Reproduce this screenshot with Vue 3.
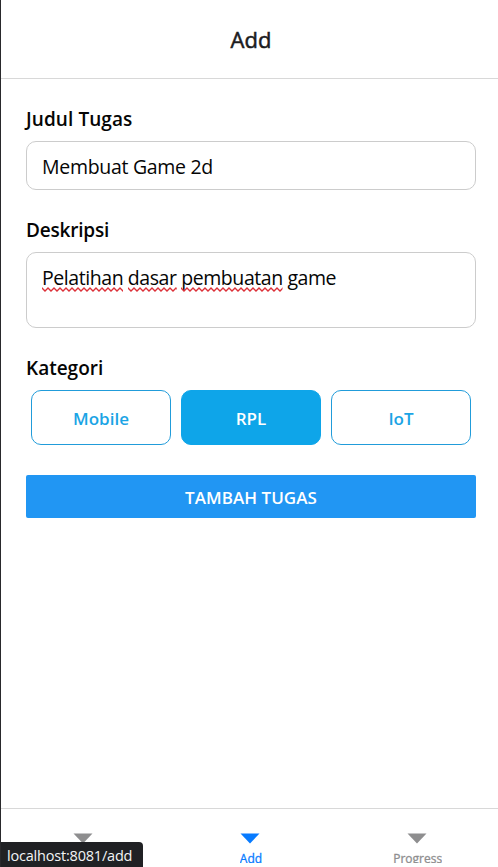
<script setup>
import { ref } from 'vue'

const title = ref('Membuat Game 2d')
const words = [
  { text: 'Pelatihan', misspelled: true },
  { text: 'dasar', misspelled: true },
  { text: 'pembuatan', misspelled: true },
  { text: 'game', misspelled: false },
]
const categories = ['Mobile', 'RPL', 'IoT']
const category = ref('RPL')
const tabs = [
  { id: 'first', label: '' },
  { id: 'add', label: 'Add' },
  { id: 'progress', label: 'Progress' },
]
const activeTab = 'add'
</script>

<template>
  <div class="screen">
    <header class="header"><h1>Add</h1></header>
    <main class="form">
      <label class="label judul">Judul Tugas</label>
      <div class="field title-field"><span class="value">{{ title }}</span></div>
      <label class="label deskripsi">Deskripsi</label>
      <div class="field area">
        <template v-for="(word, i) in words" :key="word.text">
          <span class="value word">{{ word.text }}<svg v-if="word.misspelled" class="squiggle" height="5">
            <defs>
              <pattern :id="'wave' + i" width="6" height="5" patternUnits="userSpaceOnUse">
                <path d="M-1 0 L0 1 L3 4 L6 1 L7 0" fill="none" stroke="#dc3038" stroke-width="1.3" />
              </pattern>
            </defs>
            <rect width="100%" height="5" :fill="`url(#wave${i})`" />
          </svg></span>{{ ' ' }}
        </template>
      </div>
      <label class="label">Kategori</label>
      <div class="categories">
        <button
          v-for="name in categories"
          :key="name"
          class="category"
          :class="{ selected: name === category }"
          @click="category = name"
        >{{ name }}</button>
      </div>
      <button class="submit">TAMBAH TUGAS</button>
    </main>
    <nav class="tabs">
      <a v-for="tab in tabs" :key="tab.id" class="tab" :class="{ active: tab.id === activeTab }">
        <svg class="marker" width="20" height="11" viewBox="0 0 20 11"><path d="M0.5 0.5H19.5L10 10.5Z" fill="currentColor" /></svg>
        <span class="tab-label">{{ tab.label }}</span>
      </a>
    </nav>
    <div class="status">localhost:8081/add</div>
  </div>
</template>

<style>
body {
  background: #fff;
}
</style>

<style scoped>
* {
  box-sizing: border-box;
}
.screen {
  position: relative;
  display: flex;
  flex-direction: column;
  width: 498px;
  height: 867px;
  overflow: hidden;
  border-left: 1px solid #29292c;
  background: #fff;
  font-family: "Open Sans", "Noto Sans", sans-serif;
  color: #050505;
}
.header {
  flex: none;
  height: 79px;
  display: flex;
  justify-content: center;
  align-items: center;
  padding: 0 0 1px 3px;
  border-bottom: 1px solid #d8d8d8;
}
h1 {
  margin: 0;
  font-size: 22px;
  line-height: 30px;
  font-weight: 500;
  color: #1c1c1e;
  -webkit-text-stroke: 0.5px currentColor;
}
.form {
  flex: 1;
  display: flex;
  flex-direction: column;
  padding: 25px 22px 0 25px;
  border-bottom: 1px solid #d8d8d8;
}
.label {
  height: 27px;
  margin-bottom: 10px;
  font-size: 19px;
  line-height: 31px;
  font-weight: 600;
  white-space: nowrap;
}
.judul {
  letter-spacing: 0.08px;
}
.deskripsi {
  letter-spacing: -0.2px;
}
.field {
  border: 1px solid #ccc;
  border-radius: 10px;
  padding: 12px 15px;
  white-space: nowrap;
  line-height: 26px;
  font-size: 19.5px;
}
.title-field {
  height: 49px;
  margin-bottom: 25px;
  letter-spacing: -0.3px;
}
.area {
  height: 76px;
  margin-bottom: 25px;
  letter-spacing: -0.43px;
}
.value {
  position: relative;
}
.squiggle {
  position: absolute;
  left: 0;
  bottom: -0.5px;
  width: 100%;
}
.categories {
  display: flex;
  gap: 10px;
  padding: 0 5px;
  margin-bottom: 30px;
}
button {
  font-family: inherit;
  font-weight: 600;
}
.category {
  flex: 1;
  height: 55px;
  padding: 2px 0 0;
  border: 1px solid #219cda;
  border-radius: 10px;
  background: #fff;
  color: #1ba4e5;
  font-size: 17px;
}
.category.selected {
  background: #0ea5e9;
  border-color: #0ea5e9;
  color: #fff;
}
.submit {
  height: 43px;
  padding: 2px 0 0;
  border: 0;
  border-radius: 2px;
  background: #2196f3;
  color: #fff;
  font-size: 17px;
  letter-spacing: 0.05px;
}
.tabs {
  flex: none;
  display: flex;
  height: 58px;
  margin: 0 -2px 0 -1px;
}
.tab {
  flex: 1;
  display: flex;
  flex-direction: column;
  align-items: center;
  padding-top: 24px;
  color: #8e8e8f;
}
.tab.active {
  color: #087bff;
}
.marker {
  flex: none;
  display: block;
}
.tab-label {
  height: 12px;
  margin: 7px 0 0 2px;
  overflow: hidden;
  font-size: 12px;
  line-height: 16px;
  font-weight: 500;
  -webkit-text-stroke: 0.3px currentColor;
}
.status {
  position: absolute;
  left: -1px;
  bottom: 0;
  width: 143px;
  height: 25px;
  padding-left: 7px;
  border-radius: 0 4px 0 0;
  background: #202124;
  color: #f3f4f6;
  font-size: 14.5px;
  line-height: 27px;
  letter-spacing: -0.2px;
  white-space: nowrap;
}
</style>
